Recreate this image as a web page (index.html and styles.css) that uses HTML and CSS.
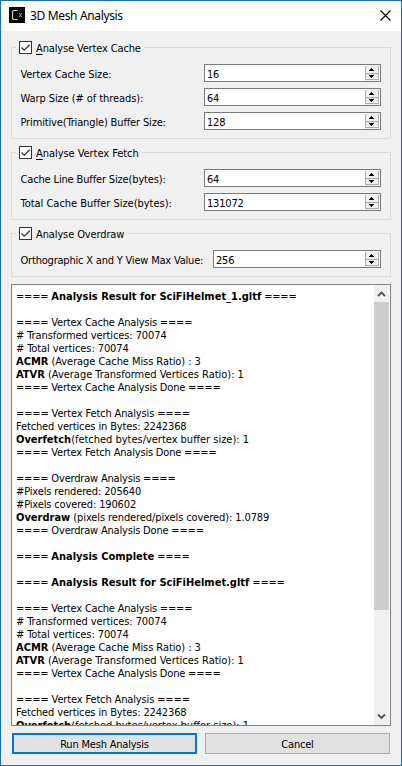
FILE: index.html
```html
<!DOCTYPE html>
<html lang="en">
<head>
<meta charset="utf-8">
<title>3D Mesh Analysis</title>
<link rel="stylesheet" href="styles.css">
</head>
<body>
<svg width="0" height="0" class="defs">
  <symbol id="check" viewBox="0 0 11 11"><path d="M1.500 5.500 L4.200 8.200 L9.700 2.700" fill="none" stroke="#333" stroke-width="1.300"/></symbol>
  <symbol id="spin" viewBox="0 0 14 16" shape-rendering="crispEdges">
    <path d="M0 0h14v16h-14z" fill="#f0f0f0"/>
    <path d="M0 1h1v14h-1zM13 1h1v14h-1zM0 8h14v1h-14zM0 14h14v1h-14z" fill="#ababab"/>
    <path d="M6 3h1v1h1v1h1v1h-5v-1h1v-1h1z" fill="#000"/>
    <path d="M4 10h5v1h-1v1h-1v1h-1v-1h-1v-1h-1z" fill="#000"/>
  </symbol>
</svg>
<div class="window">
  <header class="titlebar">
    <svg class="logo" width="16" height="16" viewBox="0 0 16 16"><path d="M0 0h16v16H0z"/><path d="M8.500 3.500H4.500L3.500 4.500v7L4.500 12.500h4" fill="none" stroke="#ccc" stroke-width="1.200"/><path d="M10 6l3 4M13 6l-3 4" stroke="#aaa" stroke-width=".9"/></svg>
    <h1>3D Mesh Analysis</h1>
    <svg class="close" width="11" height="11" viewBox="0 0 11 11"><path d="M.5.5l10 10M10.500.5l-10 10" stroke="#000" stroke-width="1.100"/></svg>
  </header>
  <main>
    <section class="group g1">
      <label class="legend"><span class="box"><svg width="11" height="11"><use href="#check"/></svg></span><span class="text t-cache"><u>A</u>nalyse Vertex Cache</span></label>
      <div class="row"><span class="name n1">Vertex Cache Size:</span><div class="field"><span>16</span><svg width="14" height="16"><use href="#spin"/></svg></div></div>
      <div class="row"><span class="name n2">Warp Size (# of threads):</span><div class="field"><span>64</span><svg width="14" height="16"><use href="#spin"/></svg></div></div>
      <div class="row"><span class="name n3">Primitive(Triangle) Buffer Size:</span><div class="field"><span>128</span><svg width="14" height="16"><use href="#spin"/></svg></div></div>
    </section>
    <section class="group g2">
      <label class="legend"><span class="box"><svg width="11" height="11"><use href="#check"/></svg></span><span class="text t-fetch"><u>A</u>nalyse Vertex Fetch</span></label>
      <div class="row"><span class="name n4">Cache Line Buffer Size(bytes):</span><div class="field"><span>64</span><svg width="14" height="16"><use href="#spin"/></svg></div></div>
      <div class="row"><span class="name n5">Total Cache Buffer Size(bytes):</span><div class="field"><span>131072</span><svg width="14" height="16"><use href="#spin"/></svg></div></div>
    </section>
    <section class="group g3">
      <label class="legend"><span class="box"><svg width="11" height="11"><use href="#check"/></svg></span><span class="text t-over">Analyse Overdraw</span></label>
      <div class="row"><span class="name n6">Orthographic X and Y View Max Value:</span><div class="field short"><span>256</span><svg width="14" height="16"><use href="#spin"/></svg></div></div>
    </section>
    <section class="output">
<div class="log"><p class="head">==== <b>Analysis Result for SciFiHelmet_1.gltf</b> ====</p><p></p>
<p class="mark">==== Vertex Cache Analysis ====</p>
<p class="count"># Transformed vertices: 70074</p>
<p class="count"># Total vertices: 70074</p>
<p class="acmr"><b>ACMR</b> (Average Cache Miss Ratio) : 3</p>
<p class="ratio"><b>ATVR</b> (Average Transformed Vertices Ratio): 1</p>
<p class="mark">==== Vertex Cache Analysis Done ====</p><p></p>
<p class="fetch">==== Vertex Fetch Analysis ====</p>
<p class="pixels">Fetched vertices in Bytes: 2242368</p>
<p class="ratio"><b>Overfetch</b>(fetched bytes/vertex buffer size): 1</p>
<p class="mark">==== Vertex Fetch Analysis Done ====</p><p></p>
<p class="mark">==== Overdraw Analysis ====</p>
<p class="pixels">#Pixels rendered: 205640</p>
<p class="pixels">#Pixels covered: 190602</p>
<p class="overdraw"><b>Overdraw</b> (pixels rendered/pixels covered): 1.0789</p>
<p class="mark">==== Overdraw Analysis Done ====</p><p></p>
<p class="head">==== <b>Analysis Complete</b> ====</p><p></p>
<p class="head">==== <b>Analysis Result for SciFiHelmet.gltf</b> ====</p><p></p>
<p class="mark">==== Vertex Cache Analysis ====</p>
<p class="count"># Transformed vertices: 70074</p>
<p class="count"># Total vertices: 70074</p>
<p class="acmr"><b>ACMR</b> (Average Cache Miss Ratio) : 3</p>
<p class="ratio"><b>ATVR</b> (Average Transformed Vertices Ratio): 1</p>
<p class="mark">==== Vertex Cache Analysis Done ====</p><p></p>
<p class="fetch">==== Vertex Fetch Analysis ====</p>
<p class="pixels">Fetched vertices in Bytes: 2242368</p>
<p class="ratio"><b>Overfetch</b>(fetched bytes/vertex buffer size): 1</p></div>
      <div class="scrollbar">
        <svg width="15" height="17" viewBox="0 0 15 17"><path d="M4 11l3.500-3.500L11 11" fill="none" stroke="#555" stroke-width="1.800"/></svg>
        <div class="thumb"></div>
        <svg width="15" height="17" viewBox="0 0 15 17"><path d="M4 6.500L7.500 10L11 6.500" fill="none" stroke="#555" stroke-width="1.800"/></svg>
      </div>
    </section>
    <footer><button class="primary">Run Mesh Analysis</button><button>Cancel</button></footer>
  </main>
</div>
</body>
</html>
```
FILE: styles.css
```css
* { box-sizing: border-box; }
body { margin: 0; font: 11px/13px "DejaVu Sans Condensed", "DejaVu Sans", sans-serif; font-stretch: condensed; color: #000; letter-spacing: -0.3px; }
svg { display: block; flex: none; }
.defs { position: absolute; }
.window { width: 402px; height: 766px; border: 1px solid #1a6fb5; background: #f0f0f0; overflow: hidden; }
.titlebar { height: 30px; background: #fff; display: flex; align-items: center; padding: 0 10px 2px 8px; }
h1 { margin: 0 auto 0 5px; padding-top: 2px; font: 12px/16px "Noto Sans", sans-serif; letter-spacing: -0.35px; }
main { padding: 16px 10px 0; }
.group { border: 1px solid #dcdcdc; padding: 0 9px 0 8px; margin-bottom: 13px; width: 380px; }
.g1 { height: 92px; }
.g2 { height: 68px; }
.g3 { height: 44px; margin-bottom: 7px; }
.legend { display: flex; align-items: center; width: max-content; height: 13px; margin: -7px 0 10px -4px; padding: 0 3px; background: #f0f0f0; gap: 4px; white-space: nowrap; }
.text { padding-top: 2px; }
.t-cache { letter-spacing: -0.15px; }
.t-fetch { letter-spacing: -0.05px; }
.t-over { letter-spacing: -0.12px; }
.box { width: 13px; height: 13px; border: 1px solid #333; background: #fff; }
u { text-underline-offset: 2px; }
.row { display: flex; justify-content: space-between; align-items: center; height: 18px; margin-bottom: 6px; white-space: nowrap; }
.name { padding: 2px 0 0 0.5px; }
.n1, .n2 { letter-spacing: -0.08px; }
.n3, .n4 { letter-spacing: -0.15px; }
.n5 { letter-spacing: -0.02px; }
.n6 { letter-spacing: -0.2px; }
.field { width: 177px; height: 18px; border: 1px solid #7a7a7a; background: #fff; display: flex; justify-content: space-between; padding: 0 1px 0 2px; }
.field span { padding-top: 3px; letter-spacing: -0.2px; }
.short { width: 168px; }
.output { width: 380px; height: 442px; border: 1px solid #828282; background: #fff; display: flex; justify-content: space-between; overflow: hidden; padding-right: 1px; }
.log { padding: 5px 0 0 4px; white-space: nowrap; }
p { margin: 0; height: 13px; }
b { letter-spacing: 0; }
.head { letter-spacing: -0.2px; }
.mark { letter-spacing: -0.19px; }
.count { letter-spacing: -0.09px; }
.acmr { letter-spacing: -0.07px; }
.ratio { letter-spacing: -0.02px; }
.fetch, .pixels { letter-spacing: -0.14px; }
.overdraw { letter-spacing: -0.1px; }
.scrollbar { width: 15px; background: #f0f0f0; display: flex; flex-direction: column; }
.scrollbar svg:last-child { margin-top: auto; }
.thumb { height: 308px; background: #cdcdcd; }
footer { display: flex; gap: 8px; padding: 7px 0 0 1px; }
button { width: 185px; height: 21px; padding: 2px 0 0; font: inherit; letter-spacing: -0.2px; color: #000; background: #e1e1e1; border: 1px solid #adadad; border-radius: 0; }
.primary { border: 2px solid #0078d7; }
```
